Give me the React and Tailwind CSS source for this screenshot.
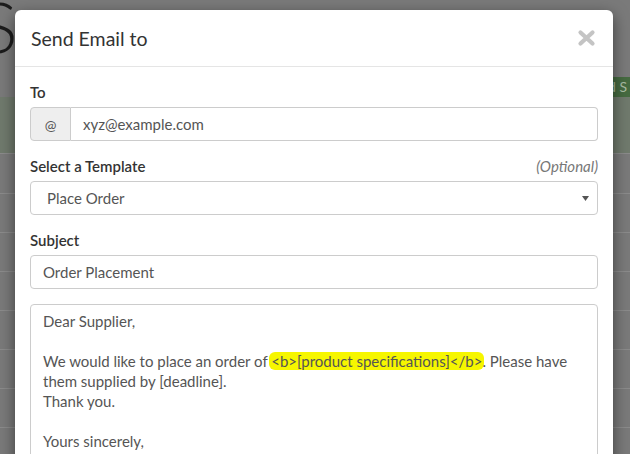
import React from "react";

function CloseIcon() {
  return (
    <svg width="19" height="18" viewBox="0 0 19 18">
      <path d="M3.5 3.5 L15.5 14.5 M15.5 3.5 L3.5 14.5" stroke="#c4c4c4" strokeWidth="4.2" strokeLinecap="round" />
    </svg>
  );
}

export default function App() {
  const font = { fontFamily: "Lato, 'Open Sans', 'Liberation Sans', sans-serif" };
  return (
    <div className="relative w-[630px] h-[454px] overflow-hidden bg-[#7a7a7a]" style={font}>
      {/* page behind backdrop */}
      <div className="flex flex-col w-full">
        <div className="h-[77px] relative overflow-hidden">
          <span className="block ml-[-20px] mt-[-14px] text-[70px] leading-[80px] font-light text-[#1c1c1c]">S</span>
        </div>
        <div className="h-[20px] flex justify-end">
          <div className="w-[32px] h-full bg-[#466b41] text-[#a9bda5] text-[14px] leading-[20px] pl-[10px] whitespace-nowrap overflow-hidden">d S</div>
        </div>
        <div className="h-[19px] bg-[#707a6d]" />
        <div className="h-[37px] bg-[#707a6d]" />
        <div className="h-[40px] border-t border-[#8b8b8b]" />
        <div className="h-[39px] border-t border-[#8b8b8b]" />
        <div className="h-[39px] border-t border-[#8b8b8b]" />
        <div className="h-[39px] border-t border-[#8b8b8b]" />
        <div className="h-[39px] border-t border-[#8b8b8b]" />
        <div className="h-[39px] border-t border-[#8b8b8b]" />
        <div className="h-[39px] border-t border-[#8b8b8b]" />
        <div className="h-[39px] border-t border-[#8b8b8b]" />
      </div>

      {/* modal */}
      <div className="absolute left-[15px] top-[10px] w-[598px] h-[480px] bg-white rounded-[6px] shadow-[0_5px_15px_rgba(0,0,0,0.5)]">
        <div className="h-[57px] border-b border-[#e5e5e5] flex items-center justify-between pl-[16px] pr-[17px]">
          <h4 className="text-[19.5px] leading-[26px] text-[#333] font-normal mt-[1px]">Send Email to</h4>
          <CloseIcon />
        </div>
        <div className="px-[15px] pt-[15px] text-[15px] text-[#555]">
          <label className="block text-[15px] leading-[20px] font-semibold text-[#333] mb-[5px]">To</label>
          <div className="flex h-[34px]">
            <div className="w-[41px] bg-[#eeeeee] border border-[#cccccc] rounded-l-[4px] flex items-center justify-center text-[#555] text-[14px]">@</div>
            <div className="flex-1 border border-l-0 border-[#cccccc] rounded-r-[4px] flex items-center pl-[12px] text-[15px]">xyz@example.com</div>
          </div>

          <div className="flex justify-between mt-[15px] mb-[5px] leading-[20px]">
            <label className="text-[15px] font-semibold text-[#333]">Select a Template</label>
            <span className="italic text-[#777] text-[15px]">(Optional)</span>
          </div>
          <div className="h-[34px] border border-[#cccccc] rounded-[4px] flex items-center justify-between pl-[16px] pr-[8px]">
            <span>Place Order</span>
            <svg width="7" height="5" viewBox="0 0 7 5"><path d="M0 0 H7 L3.5 5 Z" fill="#555" /></svg>
          </div>

          <label className="block mt-[15px] mb-[5px] text-[15px] leading-[20px] font-semibold text-[#333]">Subject</label>
          <div className="h-[34px] border border-[#cccccc] rounded-[4px] flex items-center pl-[12px]">Order Placement</div>

          <div className="mt-[15px] h-[200px] border border-[#cccccc] rounded-[4px] px-[12px] py-[6px] leading-[20px]">
            <div>Dear Supplier,</div>
            <div className="h-[20px]" />
            <div>
              We would like to place an order of{" "}
              <span className="bg-[#f6f600] rounded-[6px] px-[2px] mx-[-2px]">&lt;b&gt;[product specifications]&lt;/b&gt;</span>. Please have them supplied by [deadline].
            </div>
            <div>Thank you.</div>
            <div className="h-[20px]" />
            <div>Yours sincerely,</div>
          </div>
        </div>
      </div>
    </div>
  );
}
